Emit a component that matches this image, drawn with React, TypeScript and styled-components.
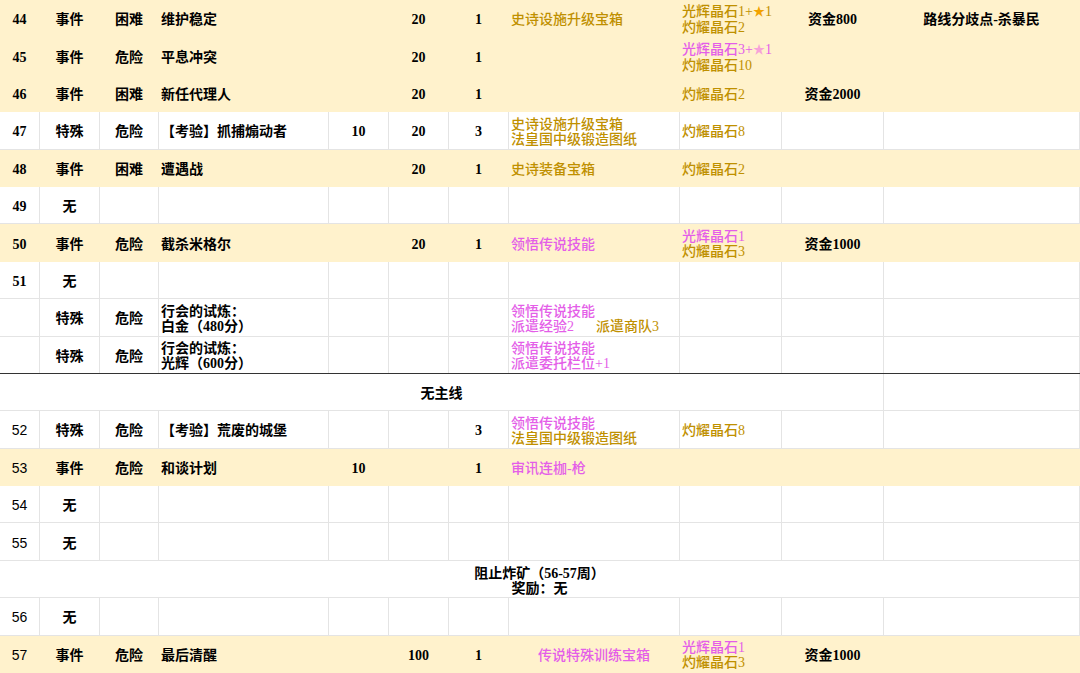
import React, { ReactNode } from 'react';
import styled, { createGlobalStyle } from 'styled-components';

const GlobalStyle = createGlobalStyle`
  html, body { margin: 0; padding: 0; background: #fff; }
  body {
    font-family: "Liberation Serif", "Noto Sans CJK SC", serif;
    font-size: 14px;
    color: #000;
  }
`;

const COLS = '40px 60px 59px 170px 60px 60px 60px 171px 102px 102px 196px';
const ALIGN = ['c', 'c', 'c', 'l', 'c', 'c', 'c', 'l', 'l', 'c', 'c'];
const YELLOW = '#fff2cc';
const GRID = '#e4e4e4';

const Sheet = styled.div`
  width: 1080px;
  display: flex;
  flex-direction: column;
  overflow: hidden;
`;

const Row = styled.div<{ $yellow?: boolean; $cols?: string; $dark?: boolean }>`
  display: grid;
  grid-template-columns: ${p => p.$cols || COLS};
  height: 37.4px;
  box-sizing: border-box;
  background: ${p => (p.$yellow ? YELLOW : '#fff')};
  border-bottom: 1px solid ${p => (p.$dark ? '#333' : p.$yellow ? YELLOW : GRID)};
`;

const Cell = styled.div<{ $align: string; $yellow?: boolean; $light?: boolean }>`
  display: flex;
  flex-direction: column;
  justify-content: center;
  align-items: ${p => (p.$align === 'l' ? 'flex-start' : 'center')};
  text-align: ${p => (p.$align === 'l' ? 'left' : 'center')};
  padding: 3px 2px 0;
  box-sizing: border-box;
  min-width: 0;
  overflow: hidden;
  white-space: nowrap;
  line-height: 15px;
  font-weight: 700;
  border-right: 1px solid ${p => (p.$yellow ? 'transparent' : GRID)};
  ${p => p.$light && `font-family: "Liberation Sans", "Noto Sans CJK SC", sans-serif; font-weight: 400;`}
`;

const Line = styled.div`
  display: block;
`;

const Gold = styled.span<{ $gap?: boolean }>`
  color: #bf9000;
  font-weight: 500;
  margin-left: ${p => (p.$gap ? '22px' : '0')};
`;

const Pink = styled.span`
  color: #e45ee8;
  font-weight: 500;
`;

const Star = styled.span<{ $pink?: boolean }>`
  color: ${p => (p.$pink ? '#f7a3d8' : '#f2a200')};
  font-size: 12px;
`;

type RowData = { y?: boolean; dark?: boolean; light?: boolean; cells: ReactNode[]; center7?: boolean };

const rows: RowData[] = [
  {
    y: true,
    cells: [
      '44', '事件', '困难', '维护稳定', '', '20', '1',
      <Gold>史诗设施升级宝箱</Gold>,
      <>
        <Line><Gold>光辉晶石1+<Star>★</Star>1</Gold></Line>
        <Line><Gold>灼耀晶石2</Gold></Line>
      </>,
      '资金800', '路线分歧点-杀暴民',
    ],
  },
  {
    y: true,
    cells: [
      '45', '事件', '危险', '平息冲突', '', '20', '1', '',
      <>
        <Line><Pink>光辉晶石3+<Star $pink>★</Star>1</Pink></Line>
        <Line><Gold>灼耀晶石10</Gold></Line>
      </>,
      '', '',
    ],
  },
  { y: true, cells: ['46', '事件', '困难', '新任代理人', '', '20', '1', '', <Gold>灼耀晶石2</Gold>, '资金2000', ''] },
  {
    cells: [
      '47', '特殊', '危险', '【考验】抓捕煽动者', '10', '20', '3',
      <>
        <Line><Gold>史诗设施升级宝箱</Gold></Line>
        <Line><Gold>法皇国中级锻造图纸</Gold></Line>
      </>,
      <Gold>灼耀晶石8</Gold>, '', '',
    ],
  },
  { y: true, cells: ['48', '事件', '困难', '遭遇战', '', '20', '1', <Gold>史诗装备宝箱</Gold>, <Gold>灼耀晶石2</Gold>, '', ''] },
  { cells: ['49', '无', '', '', '', '', '', '', '', '', ''] },
  {
    y: true,
    cells: [
      '50', '事件', '危险', '截杀米格尔', '', '20', '1',
      <Pink>领悟传说技能</Pink>,
      <>
        <Line><Pink>光辉晶石1</Pink></Line>
        <Line><Gold>灼耀晶石3</Gold></Line>
      </>,
      '资金1000', '',
    ],
  },
  { cells: ['51', '无', '', '', '', '', '', '', '', '', ''] },
  {
    cells: [
      '', '特殊', '危险',
      <>
        <Line>行会的试炼：</Line>
        <Line>白金（480分）</Line>
      </>,
      '', '', '',
      <>
        <Line><Pink>领悟传说技能</Pink></Line>
        <Line><Pink>派遣经验2</Pink><Gold $gap>派遣商队3</Gold></Line>
      </>,
      '', '', '',
    ],
  },
  {
    dark: true,
    cells: [
      '', '特殊', '危险',
      <>
        <Line>行会的试炼：</Line>
        <Line>光辉（600分）</Line>
      </>,
      '', '', '',
      <>
        <Line><Pink>领悟传说技能</Pink></Line>
        <Line><Pink>派遣委托栏位+1</Pink></Line>
      </>,
      '', '', '',
    ],
  },
];

const rows2: RowData[] = [
  {
    light: true,
    cells: [
      '52', '特殊', '危险', '【考验】荒废的城堡', '', '', '3',
      <>
        <Line><Pink>领悟传说技能</Pink></Line>
        <Line><Gold>法皇国中级锻造图纸</Gold></Line>
      </>,
      <Gold>灼耀晶石8</Gold>, '', '',
    ],
  },
  { y: true, light: true, cells: ['53', '事件', '危险', '和谈计划', '10', '', '1', <Pink>审讯连枷-枪</Pink>, '', '', ''] },
  { light: true, cells: ['54', '无', '', '', '', '', '', '', '', '', ''] },
  { light: true, cells: ['55', '无', '', '', '', '', '', '', '', '', ''] },
];

const rows3: RowData[] = [
  { light: true, cells: ['56', '无', '', '', '', '', '', '', '', '', ''] },
  {
    y: true,
    light: true,
    center7: true,
    cells: [
      '57', '事件', '危险', '最后清醒', '', '100', '1',
      <Pink>传说特殊训练宝箱</Pink>,
      <>
        <Line><Pink>光辉晶石1</Pink></Line>
        <Line><Gold>灼耀晶石3</Gold></Line>
      </>,
      '资金1000', '',
    ],
  },
];

function DataRow({ r }: { r: RowData }) {
  return (
    <Row $yellow={r.y} $dark={r.dark}>
      {r.cells.map((c, i) => (
        <Cell
          key={i}
          $align={r.center7 && i === 7 ? 'c' : ALIGN[i]}
          $yellow={r.y}
          $light={r.light && i === 0}
        >
          {c}
        </Cell>
      ))}
    </Row>
  );
}

export default function App() {
  return (
    <>
      <GlobalStyle />
      <Sheet>
        {rows.map((r, i) => (
          <DataRow key={`a${i}`} r={r} />
        ))}
        <Row $cols="884px 196px">
          <Cell $align="c">无主线</Cell>
          <Cell $align="c" />
        </Row>
        {rows2.map((r, i) => (
          <DataRow key={`b${i}`} r={r} />
        ))}
        <Row $cols="1080px">
          <Cell $align="c">
            <Line>阻止炸矿（56-57周）</Line>
            <Line>奖励：无</Line>
          </Cell>
        </Row>
        {rows3.map((r, i) => (
          <DataRow key={`c${i}`} r={r} />
        ))}
      </Sheet>
    </>
  );
}
